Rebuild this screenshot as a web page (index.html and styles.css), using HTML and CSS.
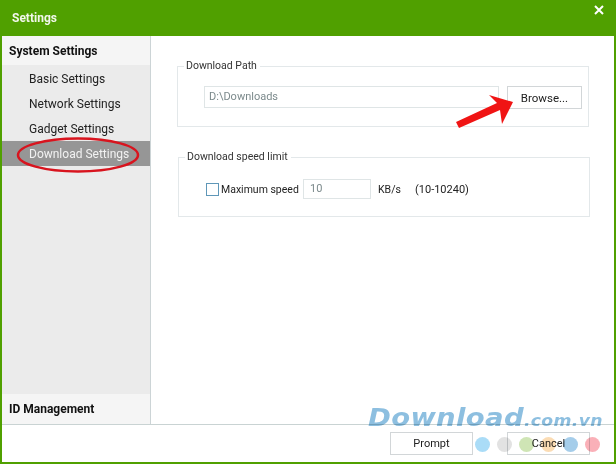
FILE: index.html
```html
<!DOCTYPE html>
<html lang="en">
<head>
  <meta charset="UTF-8">
  <title>Settings</title>
  <link rel="stylesheet" href="styles.css">
</head>
<body>
  <section class="window">
    <header class="titlebar">
      <span class="title">Settings</span>
      <svg class="close" width="10" height="10" viewBox="0 0 10 10"><path d="M1 1l8 8M9 1l-8 8" stroke="#fff" stroke-width="2"/></svg>
    </header>
    <div class="main">
      <nav class="sidebar">
        <div class="side-head">System Settings</div>
        <ul class="side-list">
          <li>Basic Settings</li>
          <li>Network Settings</li>
          <li>Gadget Settings</li>
          <li class="active">Download Settings</li>
        </ul>
        <div class="side-head side-foot">ID Management</div>
      </nav>
      <div class="content">
        <fieldset class="group">
          <legend>Download Path</legend>
          <div class="path-row">
            <div class="field path-field">D:\Downloads</div>
            <button class="btn browse" type="button">Browse...</button>
          </div>
        </fieldset>
        <fieldset class="group group-speed">
          <legend>Download speed limit</legend>
          <div class="speed-row">
            <span class="check"></span>
            <span class="speed-label">Maximum speed</span>
            <div class="field speed-field">10</div>
            <span class="unit">KB/s</span>
            <span class="range">(10-10240)</span>
          </div>
        </fieldset>
      </div>
    </div>
    <footer class="footer">
      <button class="btn" type="button">Prompt</button>
      <button class="btn" type="button">Cancel</button>
    </footer>
  </section>

  <!-- annotations drawn on top of the screenshot -->
  <svg class="marks" width="616" height="464" viewBox="0 0 616 464">
    <ellipse cx="78" cy="155" rx="60" ry="16.5" fill="none" stroke="#d8141e" stroke-width="2.5"/>
    <path d="M459 128L456 122L497 103L489 95L513 102L502 124L500 110Z" fill="#f01414"/>
  </svg>

  <div class="watermark">
    <div class="wm-text"><span class="wm-big">Download</span><span class="wm-small">.com.vn</span></div>
    <div class="dots">
      <i class="d1"></i><i class="d2"></i><i class="d3"></i><i class="d4"></i><i class="d5"></i><i class="d6"></i>
    </div>
  </div>
</body>
</html>
```

FILE: styles.css
```css
*,
*::before,
*::after{
  box-sizing: border-box;
}
body{
  margin: 0;
  width: 616px;
  height: 464px;
  overflow: hidden;
  position: relative;
  font-family: Roboto, "Noto Sans", sans-serif;
  font-size: 11px;
  color: #222;
  background: #fff;
}
.window{
  width: 616px;
  height: 464px;
  display: flex;
  flex-direction: column;
  border: 2px solid #50a000;
  border-top: 0;
}
.titlebar{
  height: 36px;
  margin: 0 -2px;
  padding: 0 12px 0 12px;
  flex: none;
  display: flex;
  align-items: center;
  justify-content: space-between;
  background: #50a000;
  color: #f2f7ea;
  font-weight: 700;
  font-size: 12px;
}
.close{
  margin: 0 0 17px;
}
.main{
  flex: 1;
  display: flex;
  min-height: 0;
  border-bottom: 1px solid #c9d3d3;
}
.sidebar{
  width: 149px;
  flex: none;
  display: flex;
  flex-direction: column;
  background: #ebebeb;
  border-right: 1px solid #ccd4d6;
  font-size: 12px;
}
.side-head{
  height: 29px;
  padding-left: 7px;
  display: flex;
  align-items: center;
  background: #f5f5f5;
  font-weight: 700;
  color: #111;
}
.side-foot{
  margin-top: auto;
  height: 30px;
}
.side-list{
  list-style: none;
  margin: 0;
  padding: 1px 0 0;
}
.side-list li{
  height: 25px;
  padding-left: 27px;
  display: flex;
  align-items: center;
}
.side-list li.active{
  background: #969696;
  color: #f2f2f2;
}
.content{
  flex: 1;
  padding: 23px 0 0 26px;
}
.group{
  width: 412px;
  height: 68px;
  margin: 0;
  padding: 0;
  border: 1px solid #e3e8ea;
}
.group legend{
  margin-left: 6px;
  padding: 0 3px 0 2px;
  line-height: 14px;
  font-size: 10.5px;
  color: #333;
}
.group-speed{
  height: 67px;
  margin: 23px 0 0 1px;
}
.path-row{
  display: flex;
  gap: 8px;
  padding: 13px 0 0 26px;
}
.field{
  height: 22px;
  padding-left: 4px;
  padding-bottom: 2px;
  display: flex;
  align-items: center;
  border: 1px solid #dfe5e6;
  color: #7c8a8c;
}
.path-field{
  width: 295px;
}
.btn{
  width: 83px;
  height: 23px;
  padding: 0;
  background: #fff;
  border: 1px solid #d2d6d8;
  font: inherit;
  color: #222;
}
.browse{
  width: 75px;
  font-size: 11.5px;
}
.speed-row{
  display: flex;
  align-items: center;
  padding: 15px 0 0 27px;
}
.check{
  width: 13px;
  height: 13px;
  border: 1px solid #5f97b8;
}
.speed-label{
  width: 82px;
  margin-left: 2px;
  font-size: 10.5px;
  white-space: nowrap;
}
.speed-field{
  width: 68px;
  height: 20px;
  padding-left: 6px;
}
.unit{
  width: 37px;
  margin-left: 7px;
  font-size: 10.5px;
}
.footer{
  height: 37px;
  flex: none;
  display: flex;
  justify-content: flex-end;
  gap: 34px;
  padding: 7px 24px 0 0;
}
.marks{
  position: absolute;
  top: 0;
  left: 0;
}
/* multiply so the button text and rule show through */
.watermark{
  position: absolute;
  left: 368px;
  top: 403px;
  width: 240px;
  mix-blend-mode: multiply;
}
.wm-text{
  font-family: "DejaVu Sans", sans-serif;
  font-style: italic;
  font-weight: 700;
  color: #8dbfe0;
  line-height: 30px;
  white-space: nowrap;
  transform: scaleX(1.1);
  transform-origin: left center;
}
.wm-big{
  font-size: 25px;
  letter-spacing: 0.3px;
}
.wm-small{
  font-size: 15.7px;
  letter-spacing: 0.3px;
}
.dots{
  position: absolute;
  top: 34px;
  left: 107px;
  display: flex;
  gap: 7px;
}
.dots i{
  width: 15px;
  height: 15px;
  border-radius: 50%;
}
.d1{ background: #aadcf7; }
.d2{ background: #e2e2e2; }
.d3{ background: #cfe5b5; }
.d4{ background: #fbdcb4; }
.d5{ background: #a5cdea; }
.d6{ background: #fab0b8; }
```
